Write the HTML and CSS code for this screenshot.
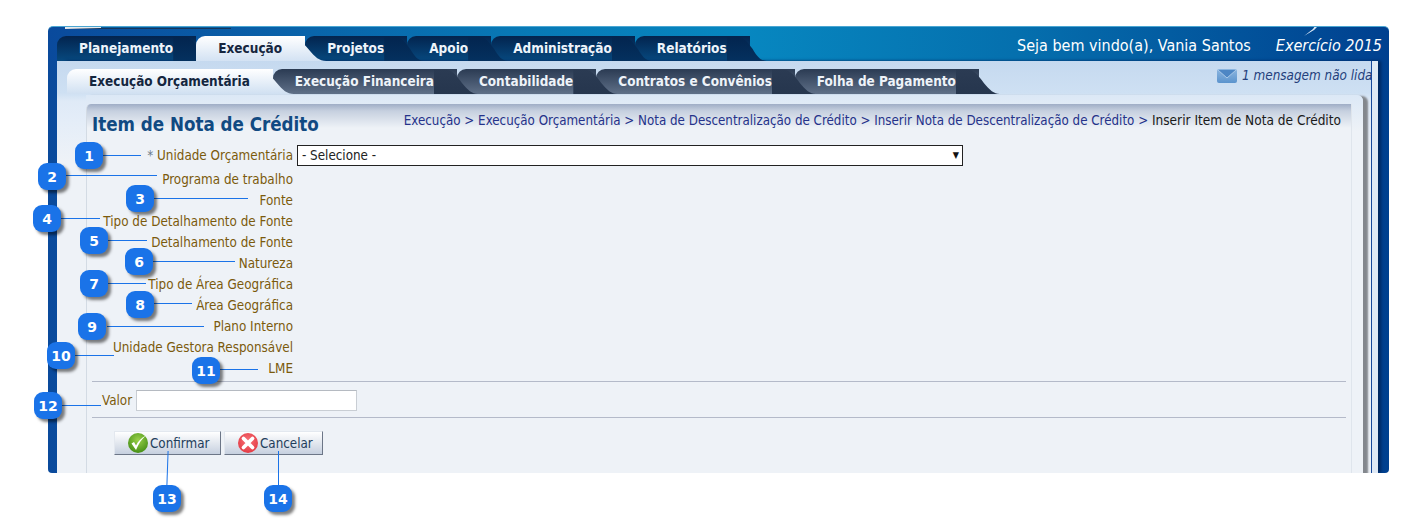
FILE: index.html
```html
<!DOCTYPE html>
<html lang="pt-BR">
<head>
<meta charset="utf-8">
<title>Item de Nota de Crédito</title>
<link rel="stylesheet" href="styles.css">
</head>
<body>
<div class="page">
  <div class="window">
    <span class="deco-tab"></span>
    <svg class="deco-slash" width="14" height="10" viewBox="0 0 14 10"><path d="M0 10 L9 3 L11 0 L14 0 L10 4 Z" fill="#dce8f4"/></svg>
    <header class="topbar">
      <nav class="tabs">
        <a class="tab">Planejamento</a>
        <a class="tab active">Execução</a>
        <a class="tab">Projetos</a>
        <a class="tab">Apoio</a>
        <a class="tab">Administração</a>
        <a class="tab">Relatórios</a>
      </nav>
      <div class="user">
        <span class="welcome">Seja bem vindo(a), Vania Santos</span>
        <em class="year">Exercício 2015</em>
      </div>
    </header>
    <section class="panel">
      <div class="subbar">
        <nav class="subtabs">
          <a class="subtab active">Execução Orçamentária</a>
          <a class="subtab">Execução Financeira</a>
          <a class="subtab">Contabilidade</a>
          <a class="subtab">Contratos e Convênios</a>
          <a class="subtab">Folha de Pagamento</a>
        </nav>
        <div class="msg">
          <svg class="msg-icon" width="20" height="14" viewBox="0 0 20 14"><defs><linearGradient id="mail" x1="0" y1="0" x2="0" y2="1"><stop offset="0" stop-color="#8db6e0"/><stop offset="1" stop-color="#5b93cd"/></linearGradient></defs><rect width="20" height="14" rx="2" fill="url(#mail)"/><path d="M1 1 L10 9 L19 1" fill="#4d86c4" stroke="#a9c8e8" stroke-width="1"/></svg>
          <em>1 mensagem não lida</em>
        </div>
      </div>
      <div class="shell">
        <main class="card">
          <div class="card-head">
            <h1 class="title">Item de Nota de Crédito</h1>
            <p class="crumbs">Execução &gt; Execução Orçamentária &gt; Nota de Descentralização de Crédito &gt; Inserir Nota de Descentralização de Crédito &gt; <b>Inserir Item de Nota de Crédito</b></p>
          </div>
          <div class="form">
            <div class="row first"><label class="lbl"><span class="req">*</span> Unidade Orçamentária</label>
              <div class="select-wrap"><select class="select"><option>- Selecione -</option></select></div></div>
            <div class="row"><label class="lbl">Programa de trabalho</label></div>
            <div class="row"><label class="lbl">Fonte</label></div>
            <div class="row"><label class="lbl">Tipo de Detalhamento de Fonte</label></div>
            <div class="row"><label class="lbl">Detalhamento de Fonte</label></div>
            <div class="row"><label class="lbl">Natureza</label></div>
            <div class="row"><label class="lbl">Tipo de Área Geográfica</label></div>
            <div class="row"><label class="lbl">Área Geográfica</label></div>
            <div class="row"><label class="lbl">Plano Interno</label></div>
            <div class="row"><label class="lbl">Unidade Gestora Responsável</label></div>
            <div class="row"><label class="lbl">LME</label></div>
          </div>
          <hr class="sep sep-a">
          <div class="value-row"><label class="lbl-v">Valor</label><input class="value" type="text"></div>
          <hr class="sep sep-b">
          <div class="actions">
            <button class="btn btn-ok" type="button">
              <svg width="20" height="20" viewBox="0 0 20 20"><defs><radialGradient id="ok" cx=".5" cy=".35" r=".7"><stop offset="0" stop-color="#9ad14a"/><stop offset="1" stop-color="#3f8a12"/></radialGradient></defs><circle cx="10" cy="10" r="10" fill="url(#ok)"/><path d="M3.5 10.5 L8 17 C10.5 11 13.5 6 18 2.5 C13 5 10 8.5 8 12.5 L6 9 Z" fill="#fff"/></svg>
              Confirmar</button>
            <button class="btn btn-no" type="button">
              <svg width="20" height="20" viewBox="0 0 20 20"><defs><radialGradient id="no" cx=".5" cy=".4" r=".7"><stop offset="0" stop-color="#f8747a"/><stop offset="1" stop-color="#e0323c"/></radialGradient></defs><circle cx="10" cy="10" r="10" fill="url(#no)"/><path d="M5.5 5.5 L14.5 14.5 M14.5 5.5 L5.5 14.5" stroke="#fff" stroke-width="3.8" stroke-linecap="round"/></svg>
              Cancelar</button>
          </div>
        </main>
      </div>
    </section>
  </div>

  <div class="notes">
    <i class="lead l1"></i><i class="lead l2"></i><i class="lead l3"></i><i class="lead l4"></i><i class="lead l5"></i><i class="lead l6"></i><i class="lead l7"></i><i class="lead l8"></i><i class="lead l9"></i><i class="lead l10"></i><i class="lead l11"></i><i class="lead l12"></i><i class="lead l13"></i><i class="lead l14"></i>
    <span class="pin p1">1</span><span class="pin p2">2</span><span class="pin p3">3</span><span class="pin p4">4</span><span class="pin p5">5</span><span class="pin p6">6</span><span class="pin p7">7</span><span class="pin p8">8</span><span class="pin p9">9</span><span class="pin p10">10</span><span class="pin p11">11</span><span class="pin p12">12</span><span class="pin p13">13</span><span class="pin p14">14</span>
  </div>
</div>
</body>
</html>
```

FILE: styles.css
```css
* { box-sizing: border-box; }
html, body { margin: 0; padding: 0; background: #fff; }
body { font-family: "DejaVu Sans Condensed", "DejaVu Sans", sans-serif; font-size: 13.35px; color: #222; }
.page { position: relative; width: 1412px; height: 527px; padding: 26px 0 0 48px; overflow: hidden; }

.window { position: relative; width: 1341px; height: 447px; overflow: hidden; border-radius: 5px 5px 4px 4px;
  background: linear-gradient(90deg, #0a4a9c 0%, #0878b5 35%, #0787c0 52%, #0570ae 72%, #00408f 100%);
  border-top: 1px solid #4aa6d2; }
.deco-tab { position: absolute; left: 17px; top: -1px; width: 166px; height: 3px; background: #0b5c9c; border-bottom: 1px solid #14365c; border-left: 36px solid #e6eaef; }
.deco-slash { position: absolute; left: 1256px; top: -1px; }

.topbar { display: flex; justify-content: space-between; height: 34px; padding: 9px 7px 0 9px; }
.tabs { display: flex; height: 25px; }
.tab { position: relative; height: 25px; padding: 0 23px 0 22px; line-height: 25px; font-weight: bold; font-size: 13.5px; color: #eef4fb; border-radius: 9px 0 0 0;
  background: linear-gradient(#03244e, #07497f); }
.tab::after { content: ""; position: absolute; z-index: 1; top: 0; left: calc(100% - 23px); width: 40px; height: 25px; background: linear-gradient(#03244e, #04315f);
  clip-path: path("M0 0 H8 C16 0 20 5 26 13 C30 20 34 25 40 25 H0 Z"); }
.tab.active { z-index: 3; color: #16263f; background: linear-gradient(#fff, #d3e2f3); }
.tab.active::after { width: 44px; background: linear-gradient(#fff, #d3e2f3); clip-path: path("M0 0 H6 C16 0 20 6 27 14 C33 21 37 25 44 25 H0 Z"); }
.user { display: flex; gap: 25px; color: #fff; font-size: 16px; line-height: 20px; }

.panel { position: relative; width: 1315px; height: 412px; margin-left: 9px; border-right: 1px solid #17489a;
  box-shadow: 6px 0 0 #dfe9f5, 9px 0 3px #00275f;
  background: linear-gradient(#c5d9ef 0, #cee0f3 32px, #dfeaf7 40px, #e4edf8 60px, #eef2f7 100px); }
.subbar { display: flex; justify-content: space-between; height: 33px; padding: 8px 0 0 10px; }
.subtabs { display: flex; height: 25px; }
.subtab { position: relative; height: 25px; padding: 0 23px 0 22px; line-height: 25px; font-weight: bold; font-size: 13.43px; color: #eef3f9; border-radius: 9px 0 0 0;
  background: linear-gradient(#2b3b53, #5f7088); }
.subtab::after { content: ""; position: absolute; z-index: 1; top: 0; left: calc(100% - 23px); width: 44px; height: 25px; background: linear-gradient(#2b3b53, #26364e);
  clip-path: path("M0 0 H8 C18 0 22 6 28 14 C34 21 38 25 44 25 H0 Z"); }
.subtab.active { z-index: 3; color: #14263f; background: linear-gradient(#fff, #d0e0f2); }
.subtab.active::after { background: linear-gradient(#fff, #d0e0f2); clip-path: path("M0 0 H6 C16 0 20 6 27 14 C33 21 37 25 44 25 H0 Z"); }
.msg { display: flex; gap: 5px; width: 154px; flex: none; overflow: hidden; white-space: nowrap; color: #24407c; font-size: 13.4px; line-height: 14px; align-items: flex-start; }
.msg-icon { flex: none; }

.shell { width: 1277px; height: 379px; margin: 1px 0 0 29px; padding: 9px 11px 0 0; border-radius: 0 6px 0 0;
  box-shadow: 5px 1px 2px #83878d;
  background: linear-gradient(#dce8f6, #eef2f7 36px); }
.card { height: 370px; padding-left: 5px; border-left: 1px solid #d3dbe4; border-right: 1px solid #dfe5ec; border-radius: 5px 0 0 0;
  background: linear-gradient(#9fadc6 0, #c6d0df 7px, #eef2f7 24px); }
.card-head { position: relative; height: 41px; display: flex; justify-content: space-between; padding-right: 10px; }
.title { margin: 9px 0 0; font-size: 18.6px; line-height: 24px; font-weight: bold; color: #114a82; }
.crumbs { margin: 7px 0 0; font-size: 13.25px; line-height: 18px; color: #25328a; }
.crumbs b { font-weight: normal; font-size: 13.55px; color: #1a1a1a; }

.row { display: flex; height: 21px; align-items: center; gap: 4px; }
.row.first { height: 24px; align-items: flex-start; }
.lbl { display: block; width: 201px; text-align: right; white-space: nowrap; line-height: 21px; color: #7b5a0c; }
.req { color: #6a7a8a; }
.select-wrap { position: relative; width: 666px; height: 21px; }
.select-wrap::after { content: "▼"; position: absolute; right: 4px; top: 5px; font-size: 9px; line-height: 10px; color: #111; pointer-events: none; }
.select { appearance: none; -webkit-appearance: none; display: block; width: 100%; height: 21px; padding: 0 4px; border: 1px solid #222; border-radius: 0; background: #fff; color: #222; font: 13.3px "DejaVu Sans Condensed", "DejaVu Sans", sans-serif; }

.sep { height: 1px; margin: 0 5px 0 0; border: 0; background: #b4bac9; }
.sep-a { margin-top: 2px; }
.value-row { display: flex; align-items: center; gap: 4px; margin: 8px 0 6px 10px; height: 21px; }
.lbl-v { color: #7b5a0c; line-height: 21px; width: 30px; }
.value { width: 221px; height: 21px; padding: 0 3px; border: 1px solid #c9ced4; background: #fff; border-top-color: #b5bac1; }

.actions { display: flex; gap: 3px; margin: 13px 0 0 22px; }
.btn { display: flex; align-items: center; gap: 2px; height: 24px; padding: 0 11px 0 13px; border: 1px solid #e3e8ef; border-right-color: #6c7687; border-bottom-color: #6c7687; background: linear-gradient(#fff, #c6d0df); color: #1f3e5c; font: 13.3px "DejaVu Sans Condensed", "DejaVu Sans", sans-serif; }
.btn svg { flex: none; }
.btn-ok { width: 107px; }
.btn-no { width: 99px; padding-left: 13px; }

.notes { position: absolute; inset: 0; pointer-events: none; }
.lead { position: absolute; height: 1px; background: #1a73e8; }
.pin { position: absolute; width: 28px; height: 27px; border-radius: 9px; background: #1a73e8; color: #fff; font: bold 14px/28px "DejaVu Sans", sans-serif; text-align: center; box-shadow: 3px 3px 3px rgba(0, 0, 0, .5); }

.p1 { left: 75px; top: 142px; } .p2 { left: 38px; top: 163px; } .p3 { left: 126px; top: 185px; }
.p4 { left: 33px; top: 205px; } .p5 { left: 80px; top: 227px; } .p6 { left: 125px; top: 248px; }
.p7 { left: 80px; top: 270px; } .p8 { left: 126px; top: 291px; } .p9 { left: 78px; top: 313px; }
.p10 { left: 47px; top: 342px; } .p11 { left: 192px; top: 357px; } .p12 { left: 34px; top: 392px; }
.p13 { left: 153px; top: 485px; } .p14 { left: 264px; top: 485px; }

.l1 { left: 103px; top: 155px; width: 38px; } .l2 { left: 66px; top: 175px; width: 91px; }
.l3 { left: 154px; top: 198px; width: 94px; } .l4 { left: 61px; top: 218px; width: 39px; }
.l5 { left: 108px; top: 240px; width: 39px; } .l6 { left: 153px; top: 261px; width: 82px; }
.l7 { left: 108px; top: 283px; width: 38px; } .l8 { left: 154px; top: 303px; width: 38px; }
.l9 { left: 107px; top: 326px; width: 97px; } .l10 { left: 75px; top: 355px; width: 39px; }
.l11 { left: 220px; top: 369px; width: 38px; } .l12 { left: 62px; top: 405px; width: 39px; }
.l13 { left: 167px; top: 451px; width: 1px; height: 34px; transform: rotate(2deg); }
.l14 { left: 278px; top: 451px; width: 1px; height: 34px; }
```
